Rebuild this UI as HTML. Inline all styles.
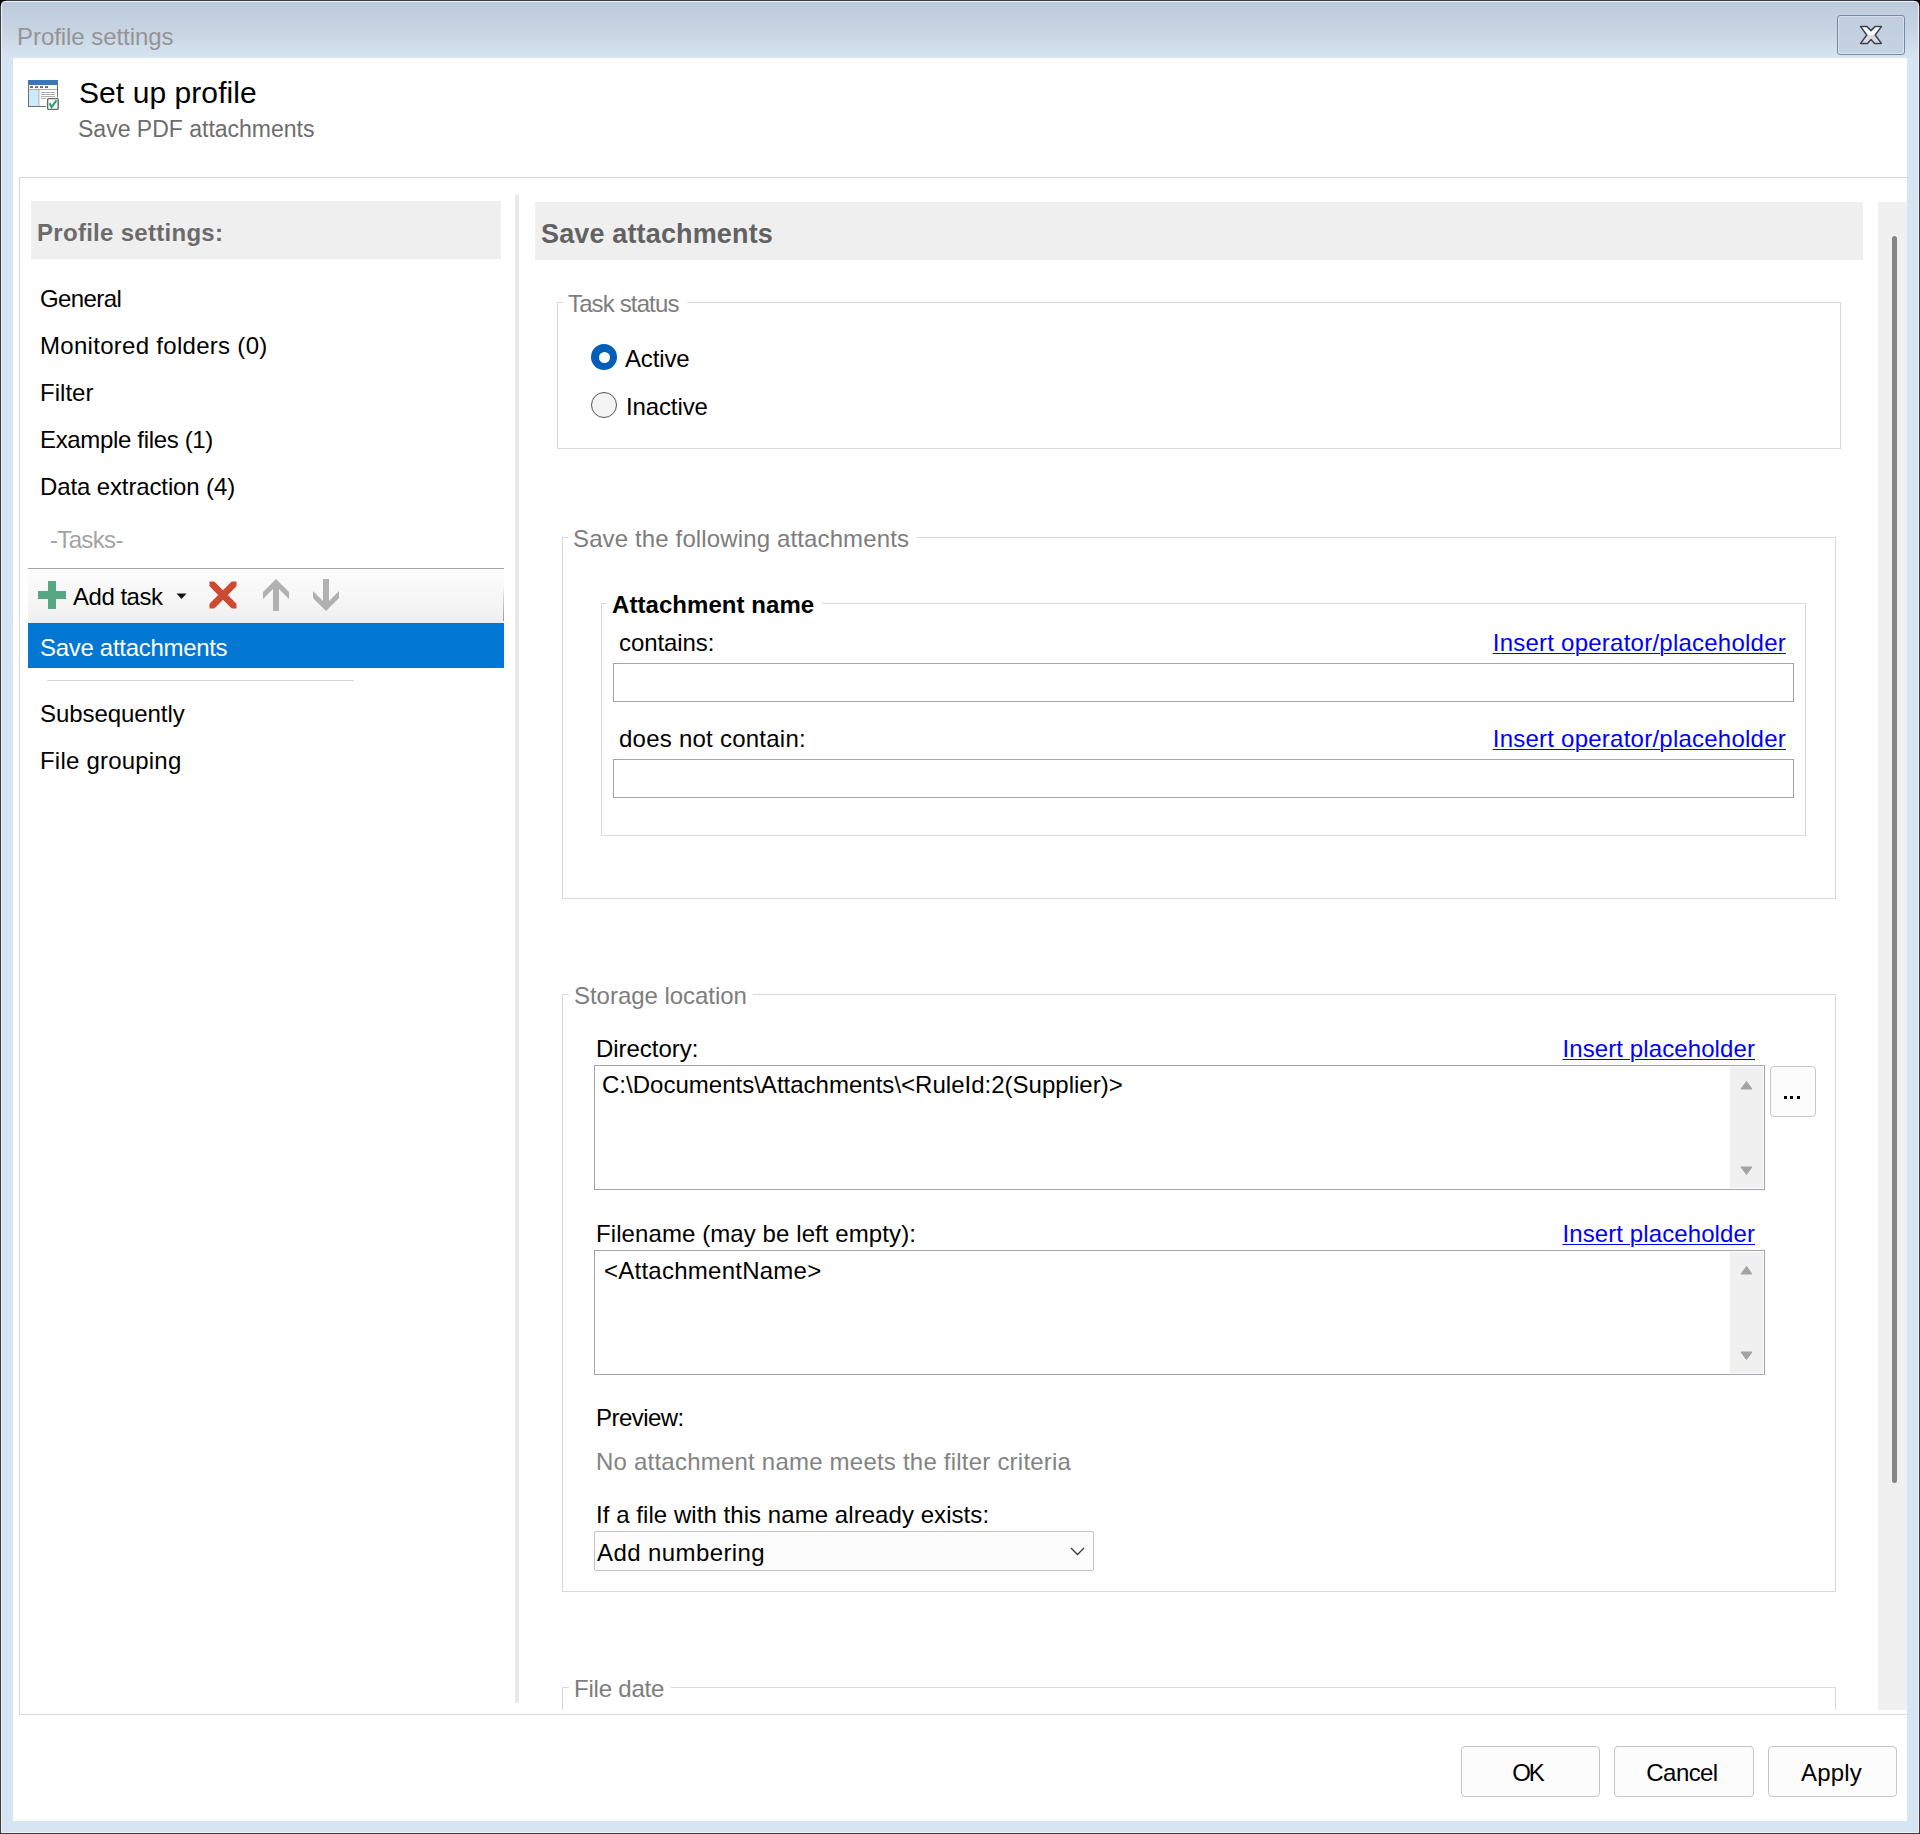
<!DOCTYPE html>
<html><head><meta charset="utf-8"><title>Profile settings</title>
<style>
html,body{margin:0;padding:0;width:1920px;height:1834px;overflow:hidden;background:#fff;}
body{position:relative;font-family:"Liberation Sans",sans-serif;}
.t{position:absolute;white-space:pre;font-family:"Liberation Sans",sans-serif;}
.r{position:absolute;box-sizing:border-box;}
a{color:#0000ff;text-decoration:underline;text-decoration-thickness:1px;text-underline-offset:2px;}
</style></head><body>
<div class="r" style="left:0px;top:0px;width:1920px;height:1834px;background:#3c3c3c;"></div>
<div class="r" style="left:0px;top:0px;width:6px;height:6px;background:#000;"></div>
<div class="r" style="left:1914px;top:0px;width:6px;height:6px;background:#000;"></div>
<div class="r" style="left:1px;top:1px;width:1918px;height:1832px;background:#d7e4f2;border-radius:4px 4px 0 0;border:1px solid #eef4fb;"></div>
<div class="r" style="left:2px;top:2px;width:1916px;height:56px;background:linear-gradient(#bccbdb,#c8d5e3 55%,#d7e4f2);border-radius:3px 3px 0 0;"></div>
<div class="r" style="left:13px;top:58px;width:1894px;height:1763px;background:#ffffff;"></div>
<div class="t" style="left:17px;top:25px;font-size:24px;line-height:24px;color:#959595;letter-spacing:-0.06px;">Profile settings</div>
<div class="r" style="left:1837px;top:15px;width:68px;height:40px;border:1px solid #7a88a6;border-radius:3px;background:linear-gradient(#bfcddc,#c6d3e2);box-shadow:inset 0 0 0 1px rgba(255,255,255,0.35);"></div>
<svg class="r" style="left:1858px;top:24px;width:26px;height:22px" viewBox="0 0 26 22">
<defs><linearGradient id="xg" x1="0" y1="0" x2="0" y2="1"><stop offset="0.5" stop-color="#fdfdfd"/><stop offset="0.5" stop-color="#dcdcdc"/></linearGradient></defs>
<path d="M2.6 2.6 L9 2.6 L13 6.6 L17 2.6 L23.4 2.6 L17.2 11 L23.4 19.4 L16.6 19.4 L13 15.6 L9.4 19.4 L2.6 19.4 L8.8 11 Z" fill="url(#xg)" stroke="#3b4254" stroke-width="1.5" stroke-linejoin="round"/>
</svg>
<svg class="r" style="left:24px;top:76px;width:40px;height:38px" viewBox="0 0 40 38">
<rect x="4.5" y="4.5" width="29" height="26" fill="#fff" stroke="#6e6e6e" stroke-width="1"/>
<rect x="4" y="4" width="30" height="5" fill="#3a77b4"/>
<rect x="5" y="9" width="28" height="4" fill="#fafafa"/>
<rect x="6" y="10.2" width="3" height="1.8" fill="#666"/><rect x="11" y="10.2" width="3" height="1.8" fill="#666"/><rect x="16" y="10.2" width="3" height="1.8" fill="#666"/><rect x="21" y="10.2" width="3" height="1.8" fill="#666"/>
<rect x="5" y="13" width="28" height="1" fill="#aaa"/>
<rect x="5" y="14" width="9.4" height="16" fill="#cdeafb"/>
<rect x="14.4" y="14" width="1" height="16" fill="#aaa"/>
<rect x="17" y="16" width="14" height="1" fill="#b0b0b0"/><rect x="17" y="18" width="14" height="1" fill="#b0b0b0"/><rect x="17" y="20" width="14" height="1" fill="#b0b0b0"/><rect x="17" y="22" width="5" height="1" fill="#b0b0b0"/>
<rect x="22" y="21.5" width="13" height="13" fill="#fff"/>
<rect x="23.6" y="22.6" width="10.6" height="10.8" rx="1.2" fill="#fff" stroke="#676767" stroke-width="1.4"/>
<path d="M25.6 27.3 L27.6 31.2 L32.5 24.4" fill="none" stroke="#22a06b" stroke-width="2"/>
</svg>
<div class="t" style="left:79px;top:78px;font-size:30px;line-height:30px;color:#000;letter-spacing:0.07px;">Set up profile</div>
<div class="t" style="left:78px;top:118px;font-size:23px;line-height:23px;color:#6d6d6d;">Save PDF attachments</div>
<div class="r" style="left:19px;top:177px;width:1888px;height:1px;background:#d9d9d9;"></div>
<div class="r" style="left:19px;top:177px;width:1px;height:1538px;background:#d9d9d9;"></div>
<div class="r" style="left:19px;top:1714px;width:1888px;height:1px;background:#d9d9d9;"></div>
<div class="r" style="left:31px;top:201px;width:470px;height:58px;background:#efefef;"></div>
<div class="t" style="left:37px;top:221px;font-size:24px;line-height:24px;color:#6b6b6b;font-weight:700;letter-spacing:0.29px;">Profile settings:</div>
<div class="t" style="left:40px;top:287px;font-size:24px;line-height:24px;color:#000;letter-spacing:-0.592px;">General</div>
<div class="t" style="left:40px;top:334px;font-size:24px;line-height:24px;color:#000;letter-spacing:0.293px;">Monitored folders (0)</div>
<div class="t" style="left:40px;top:381px;font-size:24px;line-height:24px;color:#000;letter-spacing:0.032px;">Filter</div>
<div class="t" style="left:40px;top:428px;font-size:24px;line-height:24px;color:#000;letter-spacing:-0.339px;">Example files (1)</div>
<div class="t" style="left:40px;top:475px;font-size:24px;line-height:24px;color:#000;letter-spacing:-0.123px;">Data extraction (4)</div>
<div class="t" style="left:50px;top:528px;font-size:24px;line-height:24px;color:#a3a3a3;letter-spacing:-0.657px;">-Tasks-</div>
<div class="r" style="left:28px;top:568px;width:476px;height:1px;background:#a5a5a5;"></div>
<div class="r" style="left:28px;top:569px;width:476px;height:54px;background:linear-gradient(#fcfcfc,#f6f6f6 60%,#eeeeee);"></div>
<div class="r" style="left:503px;top:585px;width:1px;height:36px;background:linear-gradient(rgba(150,150,150,0),#999);"></div>
<div class="r" style="left:48px;top:581px;width:8px;height:28px;background:#55a882;"></div>
<div class="r" style="left:38px;top:591px;width:28px;height:8px;background:#55a882;"></div>
<div class="t" style="left:73px;top:585px;font-size:24px;line-height:24px;color:#000;letter-spacing:-0.484px;">Add task</div>
<svg class="r" style="left:176px;top:593px;width:11px;height:7px" viewBox="0 0 11 7"><path d="M0.5 0.5 L10.5 0.5 L5.5 6 Z" fill="#111"/></svg>
<svg class="r" style="left:0;top:0;width:400px;height:700px" viewBox="0 0 400 700"><defs><clipPath id="xc"><rect x="209.5" y="581.5" width="27" height="27"/></clipPath></defs><path d="M203 575 L243 615 M243 575 L203 615" stroke="#cf4a32" stroke-width="6.8" clip-path="url(#xc)"/></svg>
<svg class="r" style="left:0;top:0;width:400px;height:700px" viewBox="0 0 400 700"><path d="M276 579 L289 592 L289 599 L279 589 L279 611 L273 611 L273 589 L263 599 L263 592 Z" fill="#b1b1b1"/><path d="M326 611 L339 598 L339 591 L329 601 L329 579 L323 579 L323 601 L313 591 L313 598 Z" fill="#b1b1b1"/></svg>
<div class="r" style="left:28px;top:623px;width:476px;height:45px;background:#0277d4;"></div>
<div class="t" style="left:40px;top:636px;font-size:24px;line-height:24px;color:#ffffff;letter-spacing:-0.3px;">Save attachments</div>
<div class="r" style="left:47px;top:680px;width:307px;height:1px;background:#d6d6d6;"></div>
<div class="t" style="left:40px;top:702px;font-size:24px;line-height:24px;color:#000;letter-spacing:-0.067px;">Subsequently</div>
<div class="t" style="left:40px;top:749px;font-size:24px;line-height:24px;color:#000;letter-spacing:0.208px;">File grouping</div>
<div class="r" style="left:515px;top:195px;width:4px;height:1508px;background:#e9e9e9;"></div>
<div class="r" style="left:535px;top:202px;width:1328px;height:58px;background:#efefef;"></div>
<div class="t" style="left:541px;top:221px;font-size:27px;line-height:27px;color:#626262;font-weight:700;letter-spacing:0.147px;">Save attachments</div>
<div class="r" style="left:1878px;top:202px;width:29px;height:1508px;background:#f0f0f0;"></div>
<div class="r" style="left:1892px;top:236px;width:5px;height:1247px;background:#858585;border-radius:3px;"></div>
<div class="r" style="left:557px;top:302px;width:1284px;height:147px;border:1px solid #d9d9d9;"></div>
<div class="r" style="left:563px;top:300px;width:124px;height:5px;background:#fff;"></div>
<div class="t" style="left:568px;top:292px;font-size:24px;line-height:24px;color:#7d7d7d;letter-spacing:-0.865px;">Task status</div>
<div class="r" style="left:591px;top:344px;width:26px;height:26px;border-radius:50%;background:#005fb8;"></div>
<div class="r" style="left:598.5px;top:351.5px;width:11.0px;height:11.0px;border-radius:50%;background:#fff;"></div>
<div class="t" style="left:625px;top:347px;font-size:24px;line-height:24px;color:#000;letter-spacing:-0.152px;">Active</div>
<div class="r" style="left:591px;top:392px;width:26px;height:26px;border-radius:50%;background:#f3f3f3;border:1.6px solid #555;"></div>
<div class="t" style="left:626px;top:395px;font-size:24px;line-height:24px;color:#000;letter-spacing:-0.123px;">Inactive</div>
<div class="r" style="left:562px;top:537px;width:1274px;height:362px;border:1px solid #d9d9d9;"></div>
<div class="r" style="left:568px;top:535px;width:348px;height:5px;background:#fff;"></div>
<div class="t" style="left:573px;top:527px;font-size:24px;line-height:24px;color:#7d7d7d;letter-spacing:0.131px;">Save the following attachments</div>
<div class="r" style="left:601px;top:603px;width:1205px;height:233px;border:1px solid #d9d9d9;"></div>
<div class="r" style="left:607px;top:601px;width:215px;height:5px;background:#fff;"></div>
<div class="t" style="left:612px;top:593px;font-size:24px;line-height:24px;color:#000;font-weight:700;letter-spacing:0.055px;">Attachment name</div>
<div class="t" style="left:619px;top:631px;font-size:24px;line-height:24px;color:#000;letter-spacing:-0.086px;">contains:</div>
<div class="t" style="left:1386px;top:631px;font-size:24px;line-height:24px;color:#0000ff;letter-spacing:0.237px;width:400px;text-align:right;"><a>Insert operator/placeholder</a></div>
<div class="r" style="left:613px;top:663px;width:1181px;height:39px;border:1px solid #a2a2aa;background:#fff;"></div>
<div class="t" style="left:619px;top:727px;font-size:24px;line-height:24px;color:#000;letter-spacing:0.242px;">does not contain:</div>
<div class="t" style="left:1386px;top:727px;font-size:24px;line-height:24px;color:#0000ff;letter-spacing:0.237px;width:400px;text-align:right;"><a>Insert operator/placeholder</a></div>
<div class="r" style="left:613px;top:759px;width:1181px;height:39px;border:1px solid #a2a2aa;background:#fff;"></div>
<div class="r" style="left:562px;top:994px;width:1274px;height:598px;border:1px solid #d9d9d9;"></div>
<div class="r" style="left:569px;top:992px;width:184px;height:5px;background:#fff;"></div>
<div class="t" style="left:574px;top:984px;font-size:24px;line-height:24px;color:#7d7d7d;letter-spacing:-0.033px;">Storage location</div>
<div class="t" style="left:596px;top:1037px;font-size:24px;line-height:24px;color:#000;letter-spacing:-0.035px;">Directory:</div>
<div class="t" style="left:1457px;top:1037px;font-size:24px;line-height:24px;color:#0000ff;letter-spacing:0.095px;width:298px;text-align:right;"><a>Insert placeholder</a></div>
<div class="r" style="left:594px;top:1065px;width:1171px;height:125px;border:1px solid #a2a2aa;background:#fff;"></div>
<div class="r" style="left:1730px;top:1067px;width:33px;height:121px;background:#f0f0f0;"></div>
<svg class="r" style="left:1740px;top:1080px;width:13px;height:10px" viewBox="0 0 13 10"><path d="M1 9 L6.5 1.5 L12 9 Z" fill="#a3a3a3" stroke="#a3a3a3" stroke-width="1" stroke-linejoin="round"/></svg>
<svg class="r" style="left:1740px;top:1166px;width:13px;height:10px" viewBox="0 0 13 10"><path d="M1 1 L6.5 8.5 L12 1 Z" fill="#a3a3a3" stroke="#a3a3a3" stroke-width="1" stroke-linejoin="round"/></svg>
<div class="t" style="left:602px;top:1073px;font-size:24px;line-height:24px;color:#000;letter-spacing:0.011px;">C:\Documents\Attachments\&lt;RuleId:2(Supplier)&gt;</div>
<div class="r" style="left:1770px;top:1066px;width:46px;height:51px;border:1px solid #c9c9c9;border-radius:4px;background:#fcfcfc;"></div>
<div class="r" style="left:1784px;top:1096px;width:3px;height:3px;background:#000;"></div>
<div class="r" style="left:1790px;top:1096px;width:3px;height:3px;background:#000;"></div>
<div class="r" style="left:1797px;top:1096px;width:3px;height:3px;background:#000;"></div>
<div class="t" style="left:596px;top:1222px;font-size:24px;line-height:24px;color:#000;letter-spacing:0.087px;">Filename (may be left empty):</div>
<div class="t" style="left:1457px;top:1222px;font-size:24px;line-height:24px;color:#0000ff;letter-spacing:0.095px;width:298px;text-align:right;"><a>Insert placeholder</a></div>
<div class="r" style="left:594px;top:1250px;width:1171px;height:125px;border:1px solid #a2a2aa;background:#fff;"></div>
<div class="r" style="left:1730px;top:1252px;width:33px;height:121px;background:#f0f0f0;"></div>
<svg class="r" style="left:1740px;top:1265px;width:13px;height:10px" viewBox="0 0 13 10"><path d="M1 9 L6.5 1.5 L12 9 Z" fill="#a3a3a3" stroke="#a3a3a3" stroke-width="1" stroke-linejoin="round"/></svg>
<svg class="r" style="left:1740px;top:1351px;width:13px;height:10px" viewBox="0 0 13 10"><path d="M1 1 L6.5 8.5 L12 1 Z" fill="#a3a3a3" stroke="#a3a3a3" stroke-width="1" stroke-linejoin="round"/></svg>
<div class="t" style="left:604px;top:1259px;font-size:24px;line-height:24px;color:#000;letter-spacing:0.251px;">&lt;AttachmentName&gt;</div>
<div class="t" style="left:596px;top:1406px;font-size:24px;line-height:24px;color:#000;letter-spacing:-0.551px;">Preview:</div>
<div class="t" style="left:596px;top:1450px;font-size:24px;line-height:24px;color:#838383;letter-spacing:0.219px;">No attachment name meets the filter criteria</div>
<div class="t" style="left:596px;top:1503px;font-size:24px;line-height:24px;color:#000;letter-spacing:0.057px;">If a file with this name already exists:</div>
<div class="r" style="left:594px;top:1531px;width:500px;height:40px;border:1px solid #c2c2c2;border-radius:2px;background:#fcfcfc;"></div>
<div class="t" style="left:597px;top:1541px;font-size:24px;line-height:24px;color:#000;letter-spacing:0.406px;">Add numbering</div>
<svg class="r" style="left:1069px;top:1546px;width:17px;height:11px" viewBox="0 0 17 11"><path d="M2 2 L8.5 8.5 L15 2" fill="none" stroke="#3a3a3a" stroke-width="1.4"/></svg>
<div class="r" style="left:562px;top:1687px;width:1274px;height:1px;background:#d9d9d9;"></div>
<div class="r" style="left:562px;top:1687px;width:1px;height:23px;background:#d9d9d9;"></div>
<div class="r" style="left:1835px;top:1687px;width:1px;height:23px;background:#d9d9d9;"></div>
<div class="r" style="left:569px;top:1680px;width:102px;height:12px;background:#fff;"></div>
<div class="t" style="left:574px;top:1677px;font-size:24px;line-height:24px;color:#7d7d7d;letter-spacing:-0.213px;">File date</div>
<div class="r" style="left:1461px;top:1746px;width:139px;height:51px;border:1px solid #c6c6c6;border-radius:4px;background:#fcfcfc;"></div>
<div class="t" style="left:1458px;top:1761px;font-size:24px;line-height:24px;color:#000;letter-spacing:-2.168px;width:139px;text-align:center;">OK</div>
<div class="r" style="left:1614px;top:1746px;width:140px;height:51px;border:1px solid #c6c6c6;border-radius:4px;background:#fcfcfc;"></div>
<div class="t" style="left:1612px;top:1761px;font-size:24px;line-height:24px;color:#000;letter-spacing:-0.575px;width:140px;text-align:center;">Cancel</div>
<div class="r" style="left:1768px;top:1746px;width:129px;height:51px;border:1px solid #c6c6c6;border-radius:4px;background:#fcfcfc;"></div>
<div class="t" style="left:1767px;top:1761px;font-size:24px;line-height:24px;color:#000;letter-spacing:0.179px;width:129px;text-align:center;">Apply</div>
</body></html>
